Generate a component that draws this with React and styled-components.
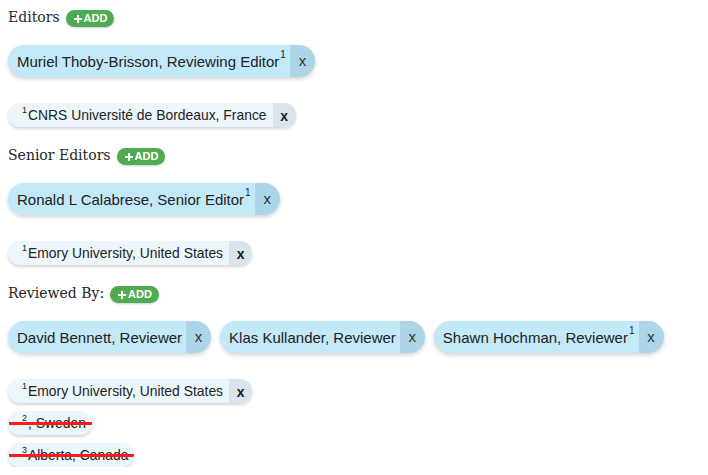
import React from "react";
import styled, { createGlobalStyle } from "styled-components";

const GlobalStyle = createGlobalStyle`
  html, body { margin: 0; padding: 0; background: #ffffff; }
  body { font-family: "Liberation Sans", Arial, sans-serif; }
`;

const Page = styled.div`
  padding: 8px 8px 0 8px;
  display: flex;
  flex-direction: column;
  gap: 19px;
`;

const Section = styled.section`
  display: flex;
  flex-direction: column;
  align-items: flex-start;
`;

const Heading = styled.div`
  display: flex;
  align-items: center;
  height: 21px;
`;

const HeadingText = styled.span`
  font-family: "DejaVu Serif", Georgia, serif;
  font-size: 14px;
  line-height: 16px;
  color: #262626;
  padding-bottom: 3px;
`;

const AddButton = styled.button`
  display: inline-flex;
  align-items: center;
  gap: 2px;
  height: 17px;
  margin-left: 6px;
  padding: 0 7px 0 8px;
  border: none;
  border-radius: 9px;
  background: #4fab52;
  color: #ffffff;
  font-family: "Liberation Sans", Arial, sans-serif;
  font-weight: 700;
  font-size: 11px;
  line-height: 1;
  box-shadow: 0 1px 2px rgba(0, 0, 0, 0.2);
  cursor: pointer;
`;

const ChipRow = styled.div`
  display: flex;
  gap: 9px;
  margin-top: 16px;
`;

const PersonChip = styled.div`
  display: flex;
  height: 32px;
  border-radius: 16px;
  overflow: hidden;
  background: #c3e9f9;
  box-shadow: 0 2px 4px rgba(0, 0, 0, 0.18);
`;

const PersonLabel = styled.span`
  display: flex;
  align-items: center;
  padding: 0 4px 0 9px;
  font-size: 15px;
  color: #222;
  white-space: nowrap;
`;

const Sup = styled.sup`
  font-size: ${(p) => (p.$small ? "9px" : "10px")};
  line-height: 1;
  position: relative;
  top: ${(p) => (p.$small ? "-5px" : "-6px")};
  vertical-align: baseline;
  margin-left: ${(p) => (p.$after ? "1px" : "0")};
  margin-right: ${(p) => (p.$after ? "0" : "1px")};
`;

const PersonRemove = styled.span`
  display: flex;
  align-items: center;
  justify-content: center;
  width: 25px;
  background: #acd6e8;
  font-size: 15px;
  color: #333;
  padding-bottom: 1px;
`;

const AffilList = styled.div`
  display: flex;
  flex-direction: column;
  align-items: flex-start;
  gap: 8px;
  margin-top: 26px;
`;

const AffilChip = styled.div`
  position: relative;
  display: flex;
  height: 24px;
  border-radius: 12px;
  overflow: hidden;
  background: #ecf7fc;
  box-shadow: 0 2px 3px rgba(0, 0, 0, 0.16);
`;

const AffilLabel = styled.span`
  display: flex;
  align-items: center;
  padding: 0 6px 0 14px;
  font-size: 13.9px;
  color: #222;
  white-space: nowrap;
`;

const AffilRemove = styled.span`
  display: flex;
  align-items: center;
  justify-content: center;
  width: 23px;
  background: #dae5eb;
  font-size: 14px;
  font-weight: 700;
  color: #1a1a1a;
  padding-top: 1px;
`;

const StrikeLine = styled.span`
  position: absolute;
  left: 1px;
  right: 0;
  top: 11px;
  height: 3px;
  background: #ff1a1a;
`;

const PlusIcon = () => (
  <svg width="8" height="8" viewBox="0 0 8 8" aria-hidden="true">
    <path d="M3 0h2v3h3v2H5v3H3V5H0V3h3z" fill="#ffffff" />
  </svg>
);

const sections = [
  {
    title: "Editors",
    people: [{ name: "Muriel Thoby-Brisson, Reviewing Editor", sup: "1" }],
    affiliations: [{ sup: "1", text: "CNRS Université de Bordeaux, France" }],
  },
  {
    title: "Senior Editors",
    people: [{ name: "Ronald L Calabrese, Senior Editor", sup: "1" }],
    affiliations: [{ sup: "1", text: "Emory University, United States" }],
  },
  {
    title: "Reviewed By:",
    people: [
      { name: "David Bennett, Reviewer" },
      { name: "Klas Kullander, Reviewer" },
      { name: "Shawn Hochman, Reviewer", sup: "1" },
    ],
    affiliations: [
      { sup: "1", text: "Emory University, United States" },
      { sup: "2", text: ", Sweden", removed: true },
      { sup: "3", text: "Alberta, Canada", removed: true },
    ],
  },
];

export default function App() {
  return (
    <>
      <GlobalStyle />
      <Page>
        {sections.map((s) => (
          <Section key={s.title}>
            <Heading>
              <HeadingText>{s.title}</HeadingText>
              <AddButton type="button">
                <PlusIcon />
                ADD
              </AddButton>
            </Heading>
            <ChipRow>
              {s.people.map((p) => (
                <PersonChip key={p.name}>
                  <PersonLabel>
                    {p.name}
                    {p.sup && <Sup $after>{p.sup}</Sup>}
                  </PersonLabel>
                  <PersonRemove>x</PersonRemove>
                </PersonChip>
              ))}
            </ChipRow>
            <AffilList>
              {s.affiliations.map((a) => (
                <AffilChip key={a.sup + a.text}>
                  <AffilLabel>
                    <Sup $small>{a.sup}</Sup>
                    {a.text}
                  </AffilLabel>
                  {a.removed ? <StrikeLine /> : <AffilRemove>x</AffilRemove>}
                </AffilChip>
              ))}
            </AffilList>
          </Section>
        ))}
      </Page>
    </>
  );
}
